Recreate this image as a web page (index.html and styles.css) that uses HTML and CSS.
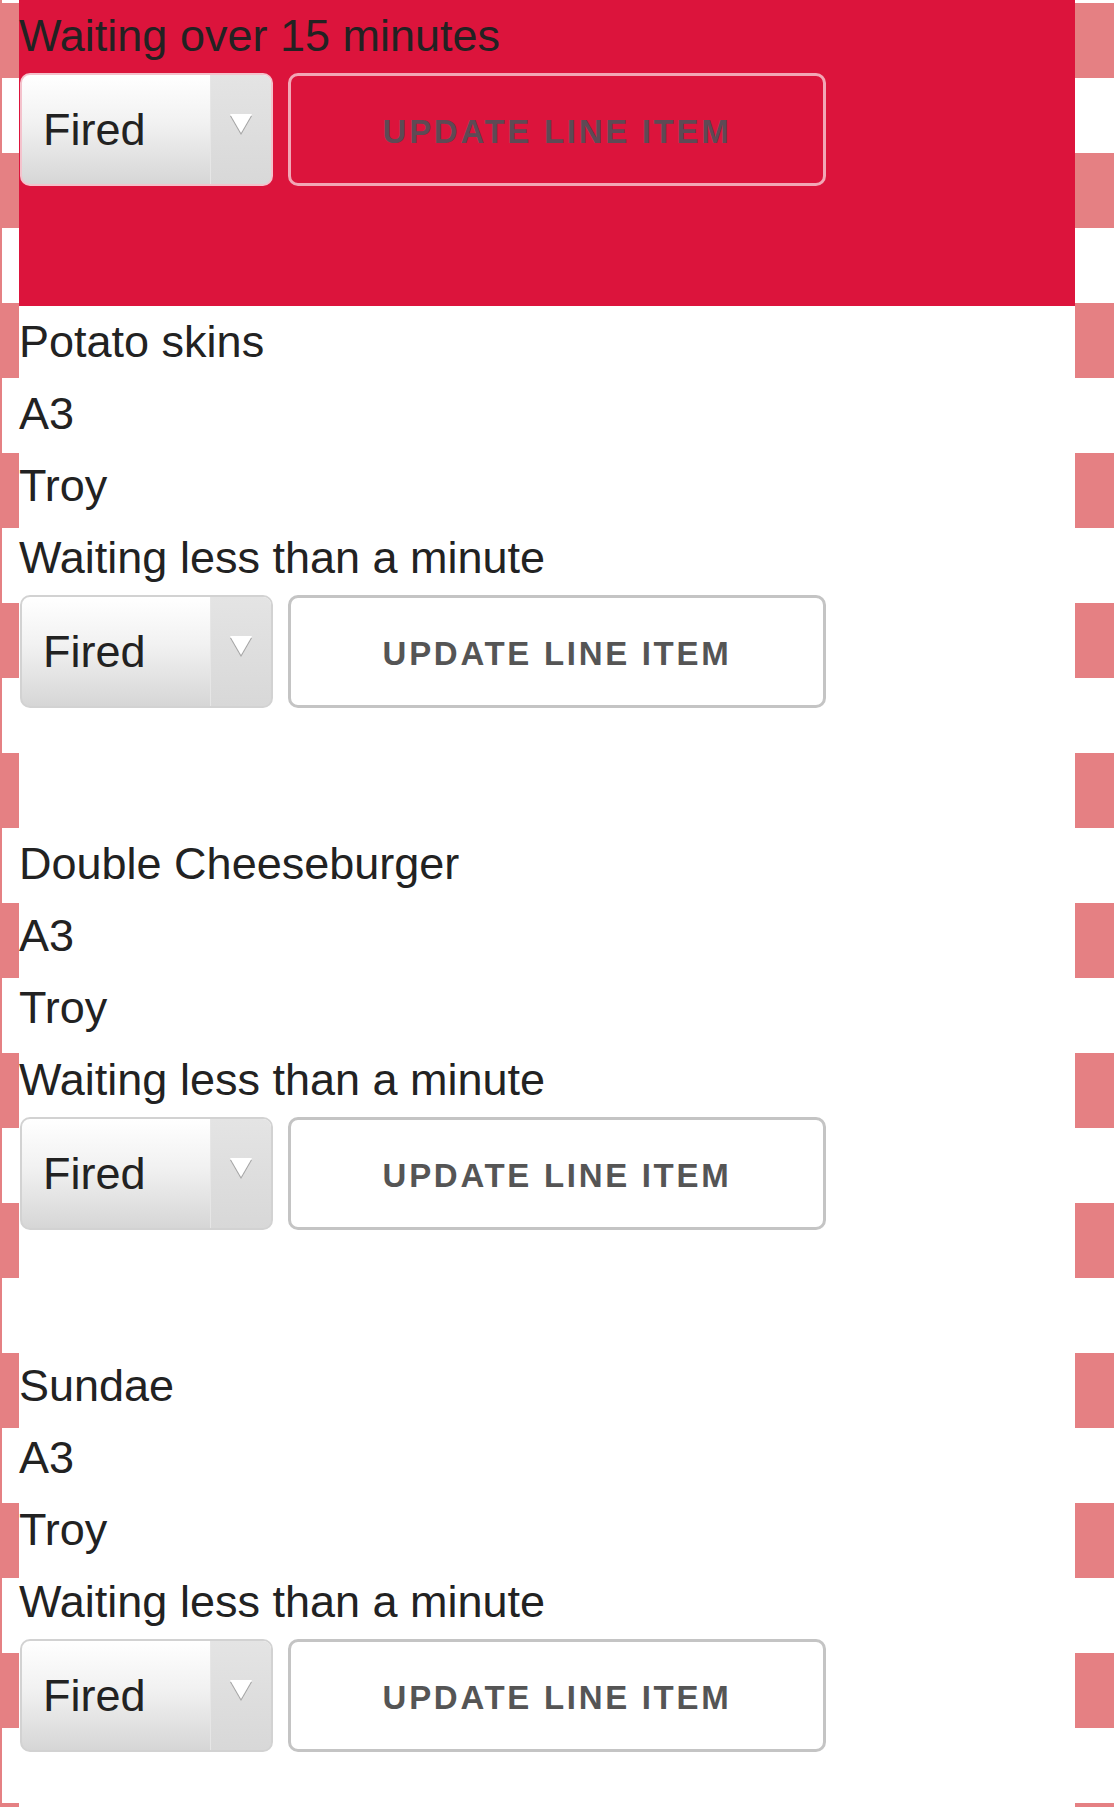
FILE: index.html
```html
<!DOCTYPE html>
<html lang="en">
<head>
  <meta charset="UTF-8" />
  <meta name="viewport" content="width=device-width, initial-scale=1.0" />
  <title>Kitchen Queue</title>
  <link rel="stylesheet" href="styles.css">
</head>
<body>
  <div class="orders">

    <div class="line-item line-item--late">
      <div class="line-item__text">Waiting over 15 minutes</div>
      <div class="line-item__actions">
        <div class="status-picker">
          <select class="status-select">
            <option>Ordered</option>
            <option selected>Fired</option>
            <option>Ready</option>
            <option>Delivered</option>
          </select>
          <span class="status-arrow">
            <svg width="24" height="23" viewBox="0 0 24 23"><polygon points="1,3 23,3 12,22" fill="#a4a4a4"/><polygon points="1,1 23,1 12,20" fill="#fff"/></svg>
          </span>
        </div>
        <button class="update-btn">Update line item</button>
      </div>
    </div>

    <div class="line-item">
      <div class="line-item__text">Potato skins</div>
      <div class="line-item__text">A3</div>
      <div class="line-item__text">Troy</div>
      <div class="line-item__text">Waiting less than a minute</div>
      <div class="line-item__actions">
        <div class="status-picker">
          <select class="status-select">
            <option>Ordered</option>
            <option selected>Fired</option>
            <option>Ready</option>
            <option>Delivered</option>
          </select>
          <span class="status-arrow">
            <svg width="24" height="23" viewBox="0 0 24 23"><polygon points="1,3 23,3 12,22" fill="#a4a4a4"/><polygon points="1,1 23,1 12,20" fill="#fff"/></svg>
          </span>
        </div>
        <button class="update-btn">Update line item</button>
      </div>
    </div>

    <div class="line-item">
      <div class="line-item__text">Double Cheeseburger</div>
      <div class="line-item__text">A3</div>
      <div class="line-item__text">Troy</div>
      <div class="line-item__text">Waiting less than a minute</div>
      <div class="line-item__actions">
        <div class="status-picker">
          <select class="status-select">
            <option>Ordered</option>
            <option selected>Fired</option>
            <option>Ready</option>
            <option>Delivered</option>
          </select>
          <span class="status-arrow">
            <svg width="24" height="23" viewBox="0 0 24 23"><polygon points="1,3 23,3 12,22" fill="#a4a4a4"/><polygon points="1,1 23,1 12,20" fill="#fff"/></svg>
          </span>
        </div>
        <button class="update-btn">Update line item</button>
      </div>
    </div>

    <div class="line-item">
      <div class="line-item__text">Sundae</div>
      <div class="line-item__text">A3</div>
      <div class="line-item__text">Troy</div>
      <div class="line-item__text">Waiting less than a minute</div>
      <div class="line-item__actions">
        <div class="status-picker">
          <select class="status-select">
            <option>Ordered</option>
            <option selected>Fired</option>
            <option>Ready</option>
            <option>Delivered</option>
          </select>
          <span class="status-arrow">
            <svg width="24" height="23" viewBox="0 0 24 23"><polygon points="1,3 23,3 12,22" fill="#a4a4a4"/><polygon points="1,1 23,1 12,20" fill="#fff"/></svg>
          </span>
        </div>
        <button class="update-btn">Update line item</button>
      </div>
    </div>

  </div>
</body>
</html>
```

FILE: styles.css
```css
body {
  margin: 0;
  min-height: 100vh;
  font-family: "Liberation Sans", Arial, Helvetica, sans-serif;
  color: #222;
  background:
    linear-gradient(#e58083, #e58083) 0 0 / 2px 100% no-repeat,
    linear-gradient(#e58083 0 75px, #fff 75px 150px) 0 3px / 100% 150px repeat;
}
.orders {
  margin: 0 39px 0 19px;
  min-height: 100vh;
  background: #fff;
}
.line-item {
  padding: 0 0 120px 1px;
}
.line-item--late {
  background: #dc143c;
}
.line-item__text {
  margin-left: -1px;
  font-size: 45px;
  line-height: 72px;
  white-space: nowrap;
}
.line-item__actions {
  display: flex;
  gap: 15px;
  margin-top: 1px;
  height: 113px;
}
.status-picker {
  display: flex;
  width: 253px;
  box-sizing: border-box;
  border: 2px solid #d2d2d2;
  border-radius: 10px;
  overflow: hidden;
  background: linear-gradient(#ffffff 0%, #f1f1f1 45%, #d6d6d6 100%);
}
.status-select {
  flex: 1;
  min-width: 0;
  margin: 0;
  padding: 0 0 0 21px;
  border: none;
  outline: none;
  background: transparent;
  -webkit-appearance: none;
  appearance: none;
  font-family: inherit;
  font-size: 45px;
  color: #222;
}
.status-arrow {
  display: flex;
  justify-content: center;
  align-items: flex-start;
  width: 61px;
  padding-top: 38px;
  box-sizing: border-box;
  border-left: 1px solid #e6e6e6;
  background: linear-gradient(#e4e4e4, #d8d8d8);
}
.update-btn {
  width: 538px;
  box-sizing: border-box;
  padding-top: 6px;
  border: 3px solid #c4c4c4;
  border-radius: 10px;
  background: #fff;
  font-family: inherit;
  font-size: 33px;
  font-weight: bold;
  letter-spacing: 2.7px;
  text-transform: uppercase;
  color: #555;
  cursor: pointer;
}
.line-item--late .status-picker {
  border-color: #f4c2cc;
}
.line-item--late .update-btn {
  background: transparent;
  border-color: #f2a7b6;
  color: #5e4a55;
}
```
